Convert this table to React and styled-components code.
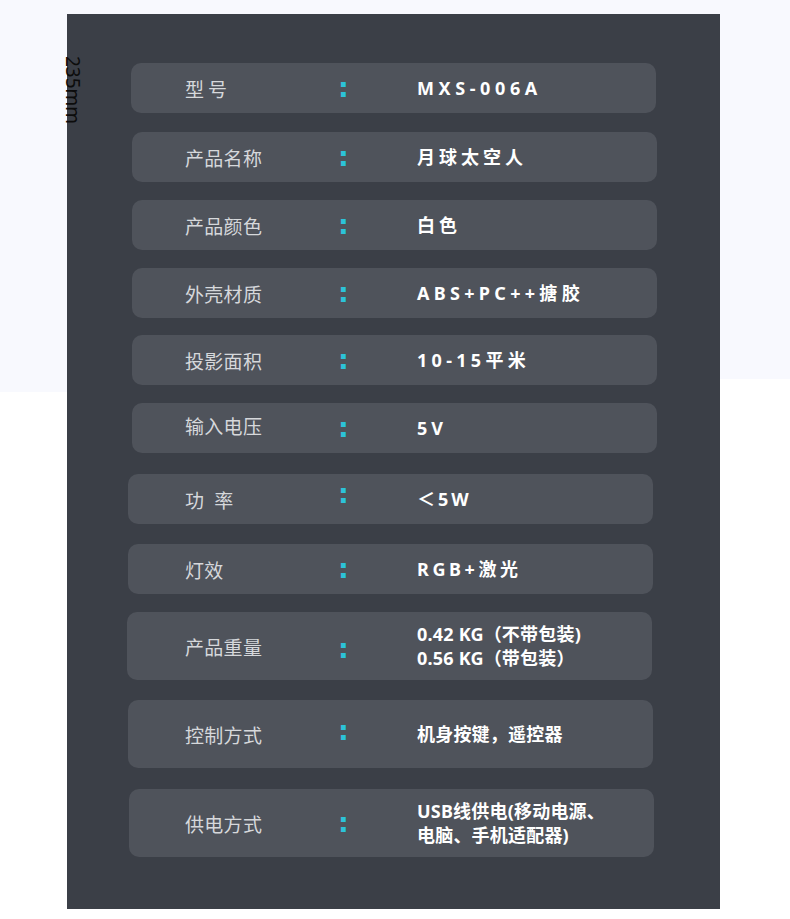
import React from "react";
import styled, { createGlobalStyle } from "styled-components";

const Global = createGlobalStyle`
  html, body { margin: 0; padding: 0; background: #ffffff; }
  body { font-family: "Noto Sans", "Noto Sans CJK SC", sans-serif; }
`;

const Page = styled.div`
  width: 790px;
  height: 919px;
  box-sizing: border-box;
  padding: 14px 0 10px 67px;
  background:
    linear-gradient(#f8f9fe, #f8f9fe) 0 0 / 67px 392px no-repeat,
    linear-gradient(#f8f9fe, #f8f9fe) 67px 0 / 100% 379px no-repeat,
    #ffffff;
`;

const Panel = styled.div`
  position: relative;
  width: 653px;
  height: 895px;
  box-sizing: border-box;
  background: #3b3f47;
  padding: 49px 0 0 60px;
  display: flex;
  flex-direction: column;
`;

const SizeMark = styled.span`
  position: absolute;
  left: -4px;
  top: 42px;
  writing-mode: vertical-rl;
  font-family: "Noto Sans", sans-serif;
  font-weight: 400;
  font-size: 19px;
  line-height: 20px;
  color: #0c0c0c;
`;

const Card = styled.div`
  width: 525px;
  height: ${(p) => p.$h}px;
  margin-top: ${(p) => p.$mt}px;
  margin-left: ${(p) => p.$x - 127}px;
  box-sizing: border-box;
  padding-left: ${(p) => 185 - p.$x}px;
  background: #4f535b;
  border-radius: 10px;
  display: grid;
  grid-template-columns: 156px 76px 1fr;
  align-items: center;
`;

const Label = styled.div`
  font-family: "Noto Sans CJK SC", "Noto Sans", sans-serif;
  font-size: 19px;
  font-weight: 400;
  color: #d6d8db;
  letter-spacing: ${(p) => p.$ls}px;
  white-space: pre;
  transform: translateY(${(p) => p.$dy || 0}px);
`;

const Colon = styled.div`
  font-family: "DejaVu Sans", sans-serif;
  font-weight: 700;
  font-size: 27px;
  line-height: 1;
  color: #2cc3d8;
  transform: translate(-3px, ${(p) => (p.$dy || 0) - 1}px);
`;

const Value = styled.div`
  font-family: "Noto Sans", "Noto Sans CJK SC", sans-serif;
  font-weight: 700;
  font-size: 18px;
  line-height: 24px;
  color: #ffffff;
  letter-spacing: ${(p) => p.$ls}px;
  white-space: pre;
`;

const rows = [
  { label: "型号", lls: 4, value: "MXS-006A", vls: 4.6, x: 131, mt: 0, h: 50 },
  { label: "产品名称", lls: 0.3, value: "月球太空人", vls: 4, x: 132, mt: 19, h: 50 },
  { label: "产品颜色", lls: 0.3, value: "白色", vls: 4, x: 132, mt: 18, h: 50 },
  { label: "外壳材质", lls: 0.3, value: "ABS+PC++搪胶", vls: 4.3, x: 132, mt: 18, h: 50 },
  { label: "投影面积", lls: 0.3, value: "10-15平米", vls: 4.3, x: 132, mt: 17, h: 50 },
  { label: "输入电压", lls: 0.3, value: "5V", vls: 4, x: 132, mt: 18, h: 50, ldy: -3 },
  { label: "功 率", lls: 3, value: "＜5W", vls: 3, x: 128, mt: 21, h: 50, cdy: -5 },
  { label: "灯效", lls: 0.3, value: "RGB+激光", vls: 3.6, x: 128, mt: 20, h: 50 },
  {
    label: "产品重量",
    lls: 0.3,
    value: "0.42 KG（不带包装)\n0.56 KG（带包装）",
    vls: 0.2,
    x: 127,
    mt: 18,
    h: 68,
    cdy: 3,
  },
  { label: "控制方式", lls: 0.3, value: "机身按键，遥控器", vls: 0.2, x: 128, mt: 20, h: 68, cdy: -3 },
  {
    label: "供电方式",
    lls: 0.3,
    value: "USB线供电(移动电源、\n电脑、手机适配器)",
    vls: 0.2,
    x: 129,
    mt: 21,
    h: 68,
  },
];

export default function App() {
  return (
    <>
      <Global />
      <Page>
        <Panel>
          <SizeMark>235mm</SizeMark>
          {rows.map((r) => (
            <Card key={r.label} $x={r.x} $mt={r.mt} $h={r.h}>
              <Label $ls={r.lls} $dy={r.ldy}>{r.label}</Label>
              <Colon $dy={r.cdy}>:</Colon>
              <Value $ls={r.vls}>{r.value}</Value>
            </Card>
          ))}
        </Panel>
      </Page>
    </>
  );
}
